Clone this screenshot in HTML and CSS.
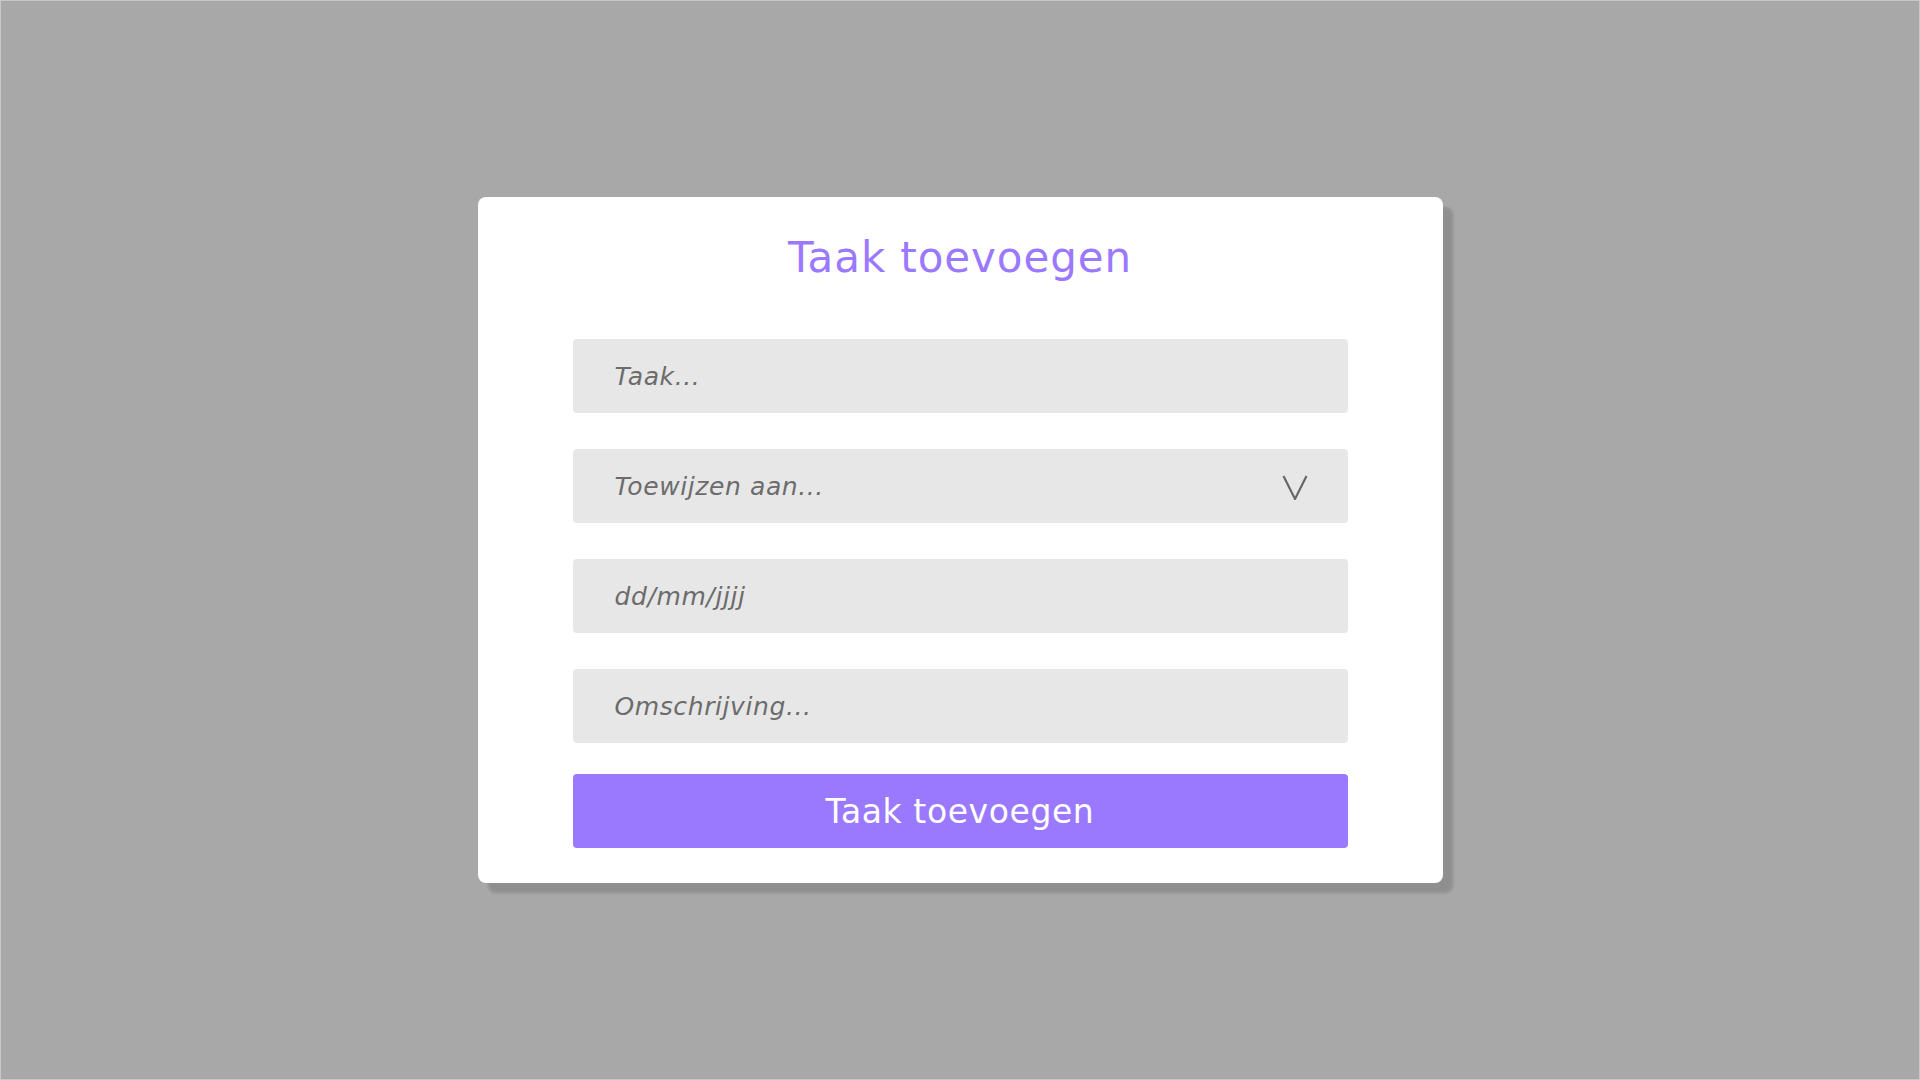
FILE: index.html
```html
<!DOCTYPE html>
<html lang="nl">
<head>
<meta charset="utf-8">
<title>Taak toevoegen</title>
<link rel="stylesheet" href="styles.css">
</head>
<body>
<div class="page">
  <form class="card">
    <h1 class="title">Taak toevoegen</h1>
    <div class="fields">
      <input class="field" type="text" placeholder="Taak...">
      <div class="field select">
        <span class="placeholder">Toewijzen aan...</span>
        <svg class="chevron" width="26" height="25" viewBox="0 0 26 25" aria-hidden="true">
          <polyline points="1.5,1 13,24 24.5,1" fill="none" stroke="#686868" stroke-width="2.2" stroke-linejoin="miter"/>
        </svg>
      </div>
      <input class="field" type="text" placeholder="dd/mm/jjjj">
      <input class="field" type="text" placeholder="Omschrijving...">
    </div>
    <button class="submit" type="button">Taak toevoegen</button>
  </form>
</div>
</body>
</html>
```

FILE: styles.css
```css
html, body {
  margin: 0;
  padding: 0;
}

body {
  background: #a8a8a8;
  font-family: "DejaVu Sans", "Liberation Sans", sans-serif;
}

.page {
  box-sizing: border-box;
  height: 100vh;
  border: 1px solid #c8c8c8;
  display: flex;
  align-items: center;
  justify-content: center;
}

.card {
  box-sizing: border-box;
  width: 965px;
  padding: 36px 95px 35px;
  background: #ffffff;
  border-radius: 8px;
  box-shadow: 10px 10px 3px rgba(0, 0, 0, 0.15);
  display: flex;
  flex-direction: column;
}

.title {
  margin: 0 0 56px;
  font-size: 42px;
  line-height: 50px;
  font-weight: normal;
  letter-spacing: 0.9px;
  color: #9b79fe;
  text-align: center;
}

.fields {
  display: flex;
  flex-direction: column;
  gap: 36px;
  margin-bottom: 31px;
}

.field {
  box-sizing: border-box;
  width: 100%;
  height: 74px;
  margin: 0;
  padding: 0 40px 0 42px;
  border: none;
  outline: none;
  border-radius: 4px;
  background: #e7e7e7;
  font-family: "DejaVu Sans", "Liberation Sans", sans-serif;
  font-size: 25px;
  font-style: italic;
  letter-spacing: 0.6px;
  color: #6c6c6c;
}

.field::placeholder {
  color: #6c6c6c;
  opacity: 1;
}

.select {
  display: flex;
  align-items: center;
  justify-content: space-between;
}

.placeholder {
  line-height: 1;
}

.chevron {
  display: block;
  margin-top: 2px;
}

.submit {
  box-sizing: border-box;
  width: 100%;
  height: 74px;
  margin: 0;
  border: none;
  border-radius: 4px;
  background: #9b79fe;
  color: #ffffff;
  font-family: "DejaVu Sans", "Liberation Sans", sans-serif;
  font-size: 33px;
  font-weight: normal;
  letter-spacing: 0.6px;
  cursor: pointer;
}
```
